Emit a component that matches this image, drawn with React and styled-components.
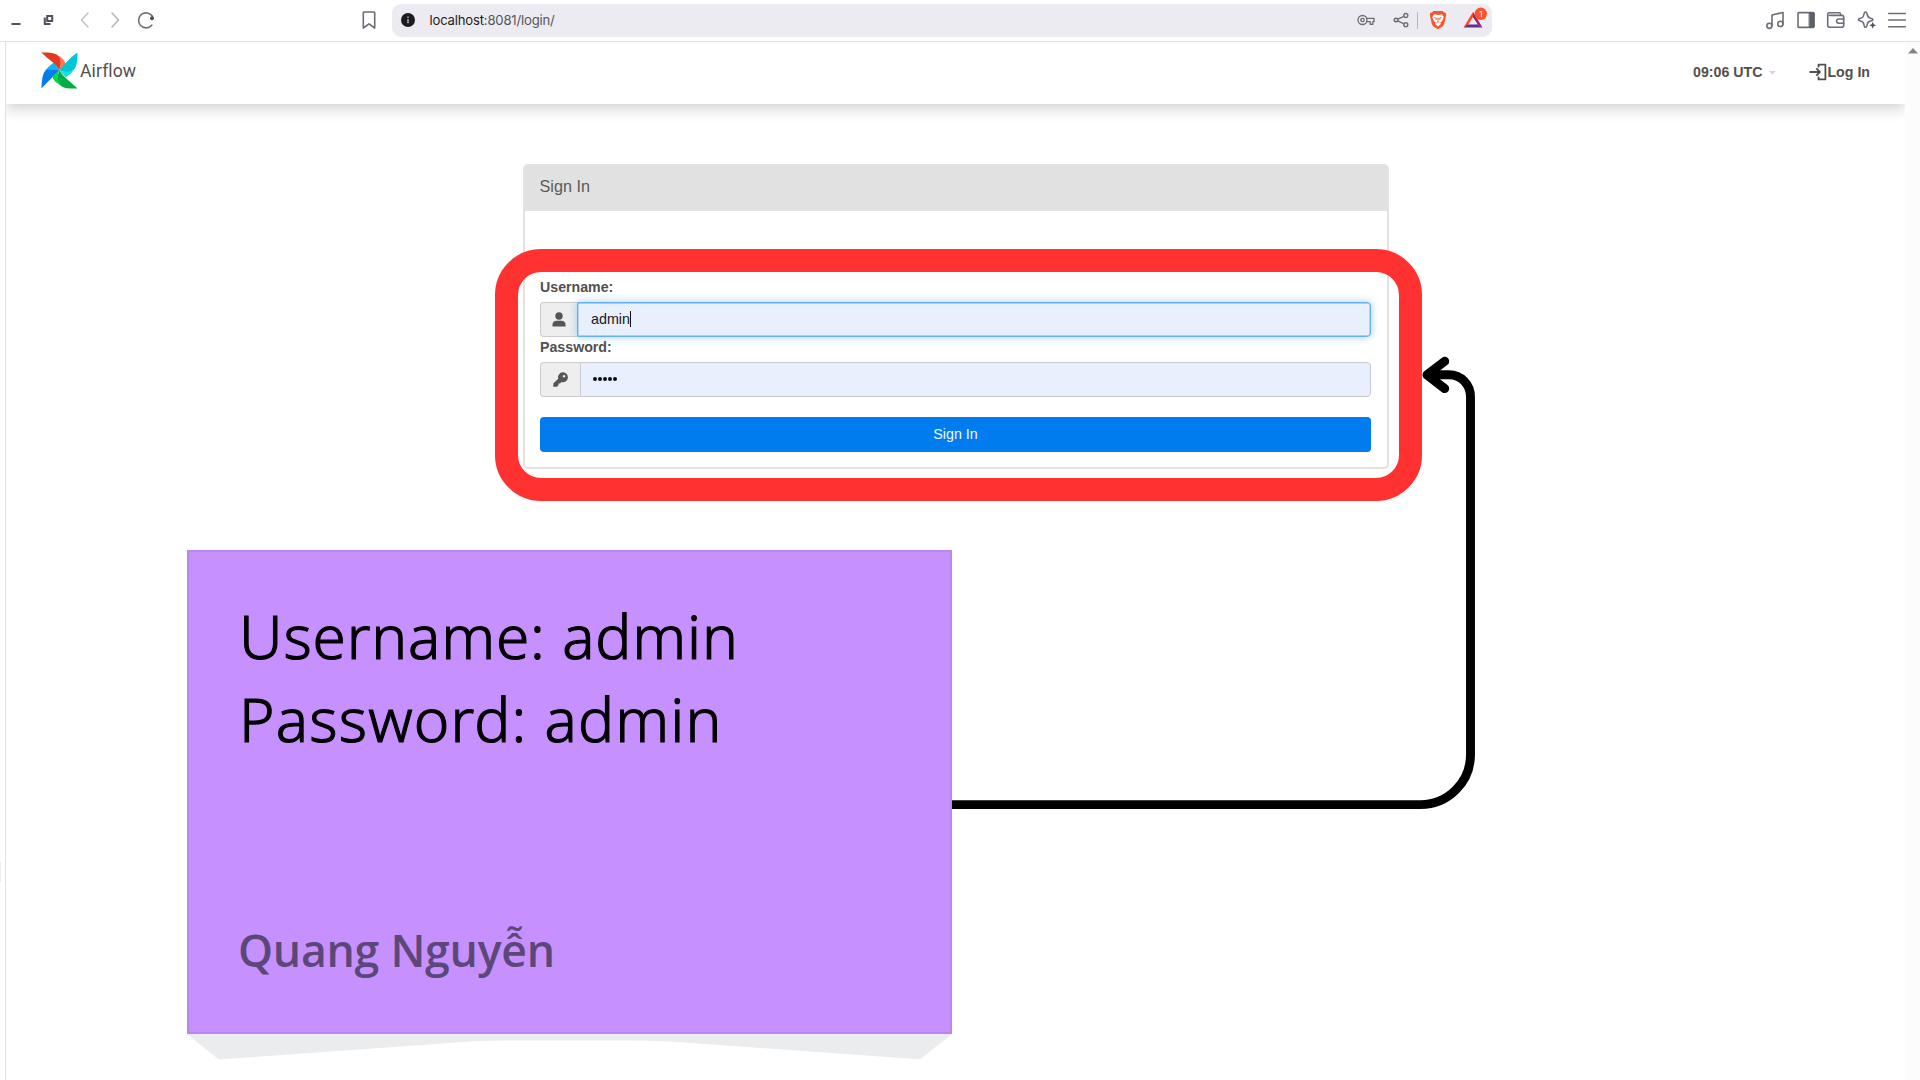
import React from 'react';
import styled, { createGlobalStyle } from 'styled-components';

const GlobalStyle = createGlobalStyle`
  * { box-sizing: border-box; }
  html, body { margin: 0; padding: 0; background: #fff; }
  body { overflow: hidden; font-family: "Liberation Sans", Arial, sans-serif; color: #51504f; }
`;

const Screen = styled.div`
  position: relative;
  width: 1920px;
  height: 1080px;
  overflow: hidden;
  display: flex;
  flex-direction: column;
  background: #fff;
`;

/* ---------- browser chrome ---------- */
const Toolbar = styled.div`
  display: flex;
  align-items: center;
  height: 42px;
  flex: none;
  padding: 0 13px 1px 0;
  border-bottom: 1px solid #e1e1e3;
`;
const Slot = styled.span`
  display: flex;
  align-items: center;
  justify-content: center;
  flex: none;
  width: ${(p) => p.$w || 20}px;
  height: 20px;
  margin-left: ${(p) => p.$gap || 0}px;
  svg { display: block; overflow: visible; }
`;
const AddressBar = styled.div`
  display: flex;
  align-items: center;
  width: 1100px;
  height: 33px;
  margin-left: 13px;
  padding: 0 7px 0 6px;
  border-radius: 9px;
  background: #ecebf1;
`;
const Url = styled.span`
  margin-left: 12px;
  flex: 1;
  font: 400 13.1px/20px Inter, sans-serif;
  letter-spacing: -0.18px;
  color: #55555c;
  b { font-weight: 400; color: #1d1d22; }
`;
const Divider = styled.span`
  width: 1px;
  height: 17px;
  margin-left: 6px;
  background: #b3b3ba;
`;
const ToolbarActions = styled.div`
  display: flex;
  gap: 10.5px;
  margin-left: auto;
`;

/* ---------- web page ---------- */
const Body = styled.div`
  display: flex;
  flex: 1;
  min-height: 0;
`;
const EdgeStrip = styled.div`
  display: flex;
  align-items: flex-end;
  width: 6px;
  padding-bottom: 198px;
  border-right: 1px solid #e1e1e3;
`;
const EdgeMark = styled.span`
  width: 1px;
  height: 20px;
  background: #ededef;
`;
const Page = styled.div`
  flex: 1;
  overflow: hidden;
  display: flex;
  flex-direction: column;
  align-items: stretch;
`;
const Scrollbar = styled.div`
  display: flex;
  justify-content: center;
  width: 15px;
  padding-top: 6px;
  background: #fcfcfc;
`;
const Navbar = styled.header`
  display: flex;
  align-items: center;
  flex: none;
  height: 62px;
  padding: 0 35px 2px 35px;
  background: #fff;
  box-shadow: 0 4px 14px rgba(0, 0, 0, 0.2);
`;
const BrandMark = styled.span`
  display: flex;
  margin-bottom: 3px;
`;
const Brand = styled.span`
  margin: 0 auto 3px 2px;
  font: 400 17.6px/24px Roboto, sans-serif;
  letter-spacing: 0.1px;
  color: #51504f;
`;
const NavItem = styled.span`
  display: flex;
  align-items: center;
  margin-left: ${(p) => p.$gap || 0}px;
  font-size: 14.2px;
  line-height: 20px;
  font-weight: 700;
  color: #51504f;
`;
const Caret = styled.span`
  margin: 1px 0 0 6px;
  width: 8px;
  height: 4px;
  background: #ddcde0;
  clip-path: polygon(0 0, 100% 0, 50% 100%);
`;
const Card = styled.section`
  width: 866px;
  height: 305px;
  margin: 60px 0 0 516.500px;
  border: 2px solid #e2e2e2;
  border-radius: 5px;
  background: #fff;
`;
const CardHeader = styled.div`
  height: 44.500px;
  padding: 10px 15px 0;
  background: #e1e1e1;
  font-size: 16.2px;
  line-height: 21px;
  color: #5a5958;
`;
const Form = styled.div`
  display: flex;
  flex-direction: column;
  padding: 66.500px 15.500px 0;
`;
const Label = styled.label`
  margin-bottom: 5px;
  font-size: 14.2px;
  line-height: 20px;
  font-weight: 700;
  color: #51504f;
`;
const InputGroup = styled.div`
  display: flex;
  height: 35px;
`;
const Addon = styled.span`
  display: flex;
  align-items: center;
  justify-content: center;
  width: ${(p) => p.$w}px;
  border: 1px solid #cccccc;
  border-right: 0;
  border-radius: 4px 0 0 4px;
  background: #eeeeee;
`;
const Field = styled.span`
  position: relative;
  display: flex;
  align-items: center;
  flex: 1;
  padding-left: ${(p) => (p.$focus ? 13 : 12)}px;
  border: 1px solid ${(p) => (p.$focus ? '#66afe9' : '#c8cad0')};
  border-radius: ${(p) => (p.$focus ? '1px' : '0')} 4px 4px ${(p) => (p.$focus ? '1px' : '0')};
  background: #e8effd;
  box-shadow: ${(p) => (p.$focus ? '0 0 8px rgba(102, 175, 233, 0.6), inset 0 0 0 0.4px #66afe9' : 'none')};
  font-size: 14.3px;
  line-height: 32px;
  padding-bottom: 1px;
  color: #16171a;
`;
const TextCursor = styled.i`
  width: 1px;
  height: 16px;
  background: #111;
`;
const Dots = styled.span`
  display: flex;
  gap: 1px;
  i { width: 4px; height: 4px; border-radius: 50%; background: #0c0d10; }
`;
const Submit = styled.button`
  height: 35px;
  margin-top: 20px;
  padding: 0 0 1px;
  border: 0;
  border-radius: 4px;
  background: #017cee;
  font: 400 14.3px/33px "Liberation Sans", Arial, sans-serif;
  color: #f2f8ff;
`;

/* ---------- annotations lying over the page ---------- */
const Highlight = styled.div`
  position: absolute;
  left: 495px;
  top: 249px;
  width: 927px;
  height: 252px;
  border: 23px solid #ff3131;
  border-radius: 46px;
`;
const Overlay = styled.svg`
  position: absolute;
  left: 0;
  top: 0;
  pointer-events: none;
`;
const Note = styled.div`
  position: absolute;
  left: 187px;
  top: 550px;
  width: 765px;
  height: 484px;
  display: flex;
  flex-direction: column;
  justify-content: space-between;
  padding: 43px 50px 52px;
  border: 2px solid #ba87ee;
  background: #c790ff;
`;
const NoteText = styled.div`
  font: 300 60.3px/83px "Noto Sans", "Open Sans", sans-serif;
  color: #000;
  white-space: pre;
  -webkit-text-stroke: 1.1px #000;
`;
const NoteLine = styled.div`
  letter-spacing: ${(p) => p.$track}px;
`;
const Author = styled.div`
  margin-left: -1px;
  font: 600 44.6px/60px "Open Sans", sans-serif;
  letter-spacing: -0.25px;
  color: #5b4879;
`;

const stroke = { fill: 'none', stroke: '#6b6d78', strokeWidth: 1.6, strokeLinecap: 'round', strokeLinejoin: 'round' };
const G = ({ w = 20, h = 20, children, ...rest }) => (
  <svg width={w} height={h} viewBox={`0 0 ${w} ${h}`} {...stroke} {...rest}>{children}</svg>
);

const Pinwheel = () => (
  <svg width="37" height="37" viewBox="0 0 37 37">
    <path d="M18.2 18.2 L12 11.5 C8.8 14.6 4.5 17 2.6 21.5 C.7 26.5 .8 31.5 .4 36.4 Z" fill="#017cee" />
    <path d="M18.2 18.2 L5.6 17.2 C8 14.2 10.3 12.2 13.2 11 Z" fill="#0cb6ff" />
    <path d="M18.2 18.2 L5.6 17.2 L12.5 11 Z" fill="#0cb6ff" />
    <path d="M18.2 18.2 C14.5 10.5 6.5 7.2 .4 .5 C9 .5 16.5 .6 19.4 6.4 C20.7 10.2 19.7 14.2 18.2 18.2 Z" fill="#e43921" />
    <path d="M18.2 18.2 C20.2 13.3 20 8.6 17.8 3.7 C21.5 5.7 23.7 8.7 24.8 12.4 Z" fill="#ff7557" />
    <path d="M18.2 18.2 C24.5 11.5 28.8 5.7 36.4 .4 C36.8 9.6 35.8 17.2 29.5 20 C25.5 20.5 21.7 19.7 18.2 18.2 Z" fill="#00c7d4" />
    <path d="M18.2 18.2 C23 20 27.3 20.2 32 18.8 C30.2 21.8 28 23.5 24.5 25.2 Z" fill="#11e1ee" />
    <path d="M18.2 18.2 C22.8 25.5 29.5 29.5 36.4 36.4 C27 37 20 36.5 17.3 30.5 C16 26 17 22 18.2 18.2 Z" fill="#00ad46" />
    <path d="M18.2 18.2 C16.3 23 16.4 27.6 18.6 32.7 C14.6 30.8 12.5 28 11.2 24.5 Z" fill="#04d659" />
  </svg>
);

const LoginIcon = () => (
  <G w={18} h={18} stroke="#51504f" strokeWidth="1.8" strokeLinecap="butt">
    <path d="M.5 9H11M7.3 5.3 11 9 7.3 12.7" />
    <path d="M9.5 4.5V1.6H16.4V16.4H9.5V13.5" />
  </G>
);

const UserIcon = () => (
  <svg width="14" height="15" viewBox="0 0 14 15" fill="#555">
    <circle cx="7" cy="4" r="3.7" />
    <path d="M.5 14.5v-2C.5 10 2.5 8.8 4.5 8.8h5c2 0 4 1.200 4 3.700v2z" />
  </svg>
);
const KeyIcon = () => (
  <svg width="15" height="15" viewBox="0 0 15 15" fill="#555">
    <path fillRule="evenodd" d="M9.800.3a5 5 0 1 1-1.300 9.800L7 11.500H5.500V13L4 14.700H.3V11.600L5.200 6.700A5 5 0 0 1 9.800.3ZM11 2.900a1.300 1.300 0 1 0 .01 0Z" />
  </svg>
);

export default function App() {
  return (
    <Screen>
      <GlobalStyle />
      <Toolbar>
        <Slot $gap={6}><G><path d="M5.500 14h9" stroke="#50515a" strokeWidth="2" strokeLinecap="butt" /></G></Slot>
        <Slot $gap={13}>
          <G stroke="#50515a" strokeWidth="2" strokeLinecap="butt" strokeLinejoin="miter">
            <path d="M8.200 6h5v5h-5zM5.800 7.500v6.500H11.500" />
          </G>
        </Slot>
        <Slot $gap={15.5}><G stroke="#c3c4c9"><path d="M13 3 6.500 10l6.500 7" /></G></Slot>
        <Slot $gap={10}><G stroke="#b4b5bb"><path d="M7 3l6.500 7L7 17" /></G></Slot>
        <Slot $gap={11}>
          <G stroke="#6b6d78"><path d="M15.800 15.200A7.500 7.500 0 1 1 16.400 6.300" /><circle cx="16" cy="8.300" r="2" fill="#50515a" stroke="none" /></G>
        </Slot>
        <Slot $gap={203}><G><path d="M4.300 2.800q0-.8.8-.8h9.800q.8 0 .8.800V18L10 13.800 4.300 18Z" /></G></Slot>
        <AddressBar>
          <Slot>
            <svg width="14" height="14" viewBox="0 0 14 14">
              <circle cx="7" cy="7" r="7" fill="#1b1b20" />
              <path d="M7 6.300v4M7 3.500v1.500" stroke="#b9b9c2" strokeWidth="1.500" />
            </svg>
          </Slot>
          <Url><b>localhost</b>:8081/login/</Url>
          <Slot>
            <G strokeWidth="1.300">
              <circle cx="6.500" cy="10" r="4.500" /><circle cx="6.500" cy="10" r="1.700" />
              <path d="M10.700 8.300H18v3.400h-1.200v2.600h-2.600v-2.600h-3.500" />
            </G>
          </Slot>
          <Slot $gap={15}>
            <G strokeWidth="1.400">
              <circle cx="14.800" cy="5.500" r="2" /><circle cx="14.800" cy="14.700" r="2" /><circle cx="5" cy="10" r="1.800" />
              <path d="M6.800 9.200 13 6.400M6.800 10.900 13 13.800" />
            </G>
          </Slot>
          <Divider />
          <Slot $gap={10}>
            <svg width="18" height="20" viewBox="0 0 18 20">
              <path d="M4.500 1h9l1.500 1.600 1.800.2.400 2.700-.4 1.200-1.700 7.600-1.500 2.200L9 19.300l-4.600-2.800-1.500-2.200L1.200 6.700.8 5.500l.4-2.700L3 2.600Z" fill="#fb542b" />
              <path d="M5.200 4.300 9 5l3.800-.7 2 2.600-1.700 4-1.700 1.500.4 1.500L9 16.400l-2.800-2.500.4-1.500-1.700-1.500-1.700-4Z" fill="#fff" />
              <path d="M5.300 7.500 7.500 8.300 7 10M12.700 7.500l-2.200.8.5 1.700M9 7.500v3.300M7.700 12.300 9 11.600l1.300.7" fill="none" stroke="#fb542b" strokeWidth="1" />
            </svg>
          </Slot>
          <Slot $gap={13} $w={24}>
            <svg width="24" height="20" viewBox="0 0 24 20">
              <path d="M12 2 2.500 17.500 7 14.800 12 7Z" fill="#ff4724" />
              <path d="M12 2l9.500 15.500L17 14.800 12 7Z" fill="#9e1f63" />
              <path d="M2.500 17.500h19L17 14.500H7Z" fill="#662d91" />
              <circle cx="19.800" cy="3.800" r="6.200" fill="#fb542b" />
              <text x="19.800" y="6.700" textAnchor="middle" fontFamily="Inter, sans-serif" fontSize="8" fill="#fff" stroke="none">1</text>
            </svg>
          </Slot>
        </AddressBar>
        <ToolbarActions>
          <Slot><G><circle cx="4.400" cy="15.800" r="2.600" /><circle cx="15.400" cy="13.900" r="2.600" /><path d="M7 15.800V5L18 2.500v11.400" /></G></Slot>
          <Slot><G><rect x="2" y="2.600" width="16" height="14.800" rx=".8" /><path d="M13.500 3h4.500v14h-4.500z" fill="#5d5f69" stroke="#5d5f69" strokeWidth="1" /></G></Slot>
          <Slot><G><path d="M14.500 5V4q0-1.300-1.300-1.300H3.500Q1.700 2.700 1.700 4.500v10.800q0 2 2 2h12q2 0 2-2V7.400q0-2-2-2H3.500" /><path d="M17.700 9h-5q-2 0-2 2.100t2 2.100h5" /></G></Slot>
          <Slot><G><path d="M8.500 2q1.300 0 1.700 2.500.6 3 3.200 3.700 2.600.5 2.600 1.500t-2.300 1.400q-3 .7-3.500 3.200-.5 3-1.700 3T6.900 14.300q-.6-2.700-3.300-3.200Q1.300 10.700 1.300 9.700t2.400-1.500q2.700-.6 3.200-3.700Q7.300 2 8.500 2Z" strokeWidth="1.500" /><path d="m15.700 11.800 1 2.500 2.500 1-2.500 1-1 2.500-1-2.500-2.500-1 2.500-1Z" fill="#50515a" stroke="none" /></G></Slot>
          <Slot><G><path d="M1.700 3.500h16.600M1.700 10h16.600M1.700 16.700h16.600" /></G></Slot>
        </ToolbarActions>
      </Toolbar>

      <Body>
        <EdgeStrip><EdgeMark /></EdgeStrip>
        <Page>
          <Navbar>
            <BrandMark><Pinwheel /></BrandMark>
            <Brand>Airflow</Brand>
            <NavItem>09:06 UTC<Caret /></NavItem>
            <NavItem $gap={33}><LoginIcon />Log In</NavItem>
          </Navbar>
          <Card>
            <CardHeader>Sign In</CardHeader>
            <Form>
              <Label>Username:</Label>
              <InputGroup>
                <Addon $w={37}><UserIcon /></Addon>
                <Field $focus>admin<TextCursor /></Field>
              </InputGroup>
              <Label>Password:</Label>
              <InputGroup>
                <Addon $w={40}><KeyIcon /></Addon>
                <Field><Dots><i /><i /><i /><i /><i /></Dots></Field>
              </InputGroup>
              <Submit>Sign In</Submit>
            </Form>
          </Card>
        </Page>
        <Scrollbar>
          <svg width="10" height="6" viewBox="0 0 10 6"><path d="M5 0 10 5.500H0Z" fill="#858585" /></svg>
        </Scrollbar>
      </Body>

      <Highlight />
      <Overlay width="1920" height="1080" viewBox="0 0 1920 1080" fill="none">
        <path d="M187 1034 218.500 1059.300Q222 1059.500 226 1059L470 1041.500Q490 1040.500 510 1040.500H630Q650 1040.500 670 1041.500L912 1058.800Q917 1059.500 920.500 1059L952 1034Z" fill="#ebecee" />
        <path d="M950 804.600H1420.500A50 50 0 0 0 1470.500 754.600V397C1470.500 384.500 1461 374.800 1449 374.800H1429" stroke="#000" strokeWidth="8.900" />
        <path d="M1444.700 361.300 1427 374.900 1444.700 388.600" stroke="#000" strokeWidth="9" strokeLinecap="round" strokeLinejoin="round" />
      </Overlay>
      <Note>
        <NoteText>
          <NoteLine $track={0.85}>Username: admin</NoteLine>
          <NoteLine $track={1.2}>Password: admin</NoteLine>
        </NoteText>
        <Author>Quang Nguyễn</Author>
      </Note>
    </Screen>
  );
}
